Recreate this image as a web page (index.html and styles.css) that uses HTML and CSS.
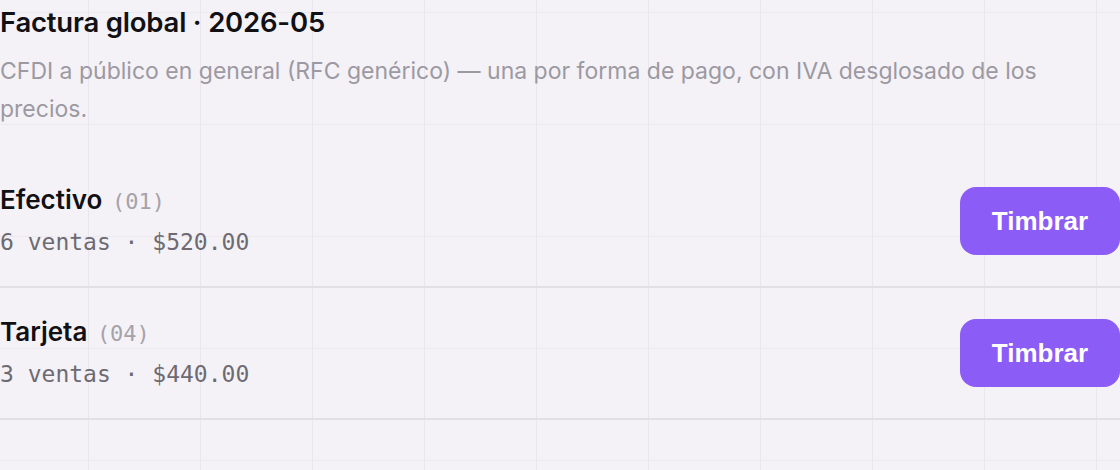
FILE: index.html
```html
<!DOCTYPE html>
<html lang="es">
<head>
<meta charset="utf-8">
<link rel="stylesheet" href="styles.css">
</head>
<body>
<main class="panel">
  <header class="head">
    <h1 class="title">Factura global · 2026-05</h1>
    <p class="desc">CFDI a público en general (RFC genérico) — una por forma de pago, con IVA desglosado de los precios.</p>
  </header>
  <ul class="list">
    <li class="row">
      <div class="info">
        <div class="name">Efectivo <span class="code">(01)</span></div>
        <div class="meta">6 ventas · $520.00</div>
      </div>
      <button class="btn">Timbrar</button>
    </li>
    <li class="row">
      <div class="info">
        <div class="name">Tarjeta <span class="code">(04)</span></div>
        <div class="meta">3 ventas · $440.00</div>
      </div>
      <button class="btn">Timbrar</button>
    </li>
  </ul>
</main>
</body>
</html>
```
FILE: styles.css
```css
html, body {
  margin: 0;
  padding: 0;
}
body {
  width: 1120px;
  height: 470px;
  overflow: hidden;
  background-color: #f4f2f7;
  background-image:
    linear-gradient(to right, #e9e6ed 1px, transparent 1px),
    linear-gradient(to bottom, #ebe8ef 1px, transparent 1px);
  background-size: 112px 112px;
  background-position: 88px 12px;
  font-family: Inter, "Noto Sans", sans-serif;
}
.panel {
  width: 1120px;
}
.head {
  padding-top: 4px;
}
.title {
  margin: 0;
  font-size: 27.5px;
  font-weight: 600;
  line-height: 36px;
  color: #111014;
  letter-spacing: -0.2px;
}
.desc {
  margin: 12px 0 0;
  font-size: 23px;
  line-height: 38px;
  color: #9c99a2;
}
.list {
  list-style: none;
  margin: 28px 0 0;
  padding: 0;
}
.row {
  display: flex;
  align-items: center;
  justify-content: space-between;
  padding: 30px 0;
  border-bottom: 2px solid #e2dfe6;
}
.info {
  display: flex;
  flex-direction: column;
  gap: 14px;
}
.name {
  height: 28px;
  font-size: 26px;
  font-weight: 600;
  line-height: 28px;
  color: #111014;
}
.code {
  margin-left: 3px;
  font-family: "DejaVu Sans Mono", monospace;
  font-size: 22px;
  font-weight: 400;
  line-height: 1;
  color: #a5a2aa;
}
.meta {
  height: 28px;
  font-family: "DejaVu Sans Mono", monospace;
  font-size: 23px;
  line-height: 28px;
  color: #6d6a72;
}
.btn {
  width: 160px;
  height: 68px;
  border: 0;
  border-radius: 16px;
  background: #8b5cf6;
  color: #ffffff;
  font-family: "Liberation Sans", Arial, sans-serif;
  font-size: 26px;
  font-weight: 700;
}
```
